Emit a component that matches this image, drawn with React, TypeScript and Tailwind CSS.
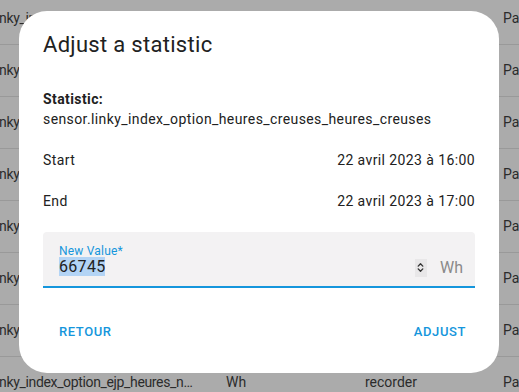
import { ChevronsUpDown } from 'lucide-react';

const rows = [
  { name: 'linky_index_option_heures_creuses_heures_creuses', unit: 'Wh', source: 'recorder' },
  { name: 'linky_index_option_heures_pleines_heures_pleines', unit: 'Wh', source: 'recorder' },
  { name: 'linky_index_option_base_index', unit: 'Wh', source: 'recorder' },
  { name: 'linky_index_option_tempo_bleu_hc', unit: 'Wh', source: 'recorder' },
  { name: 'linky_index_option_tempo_bleu_hp', unit: 'Wh', source: 'recorder' },
  { name: 'linky_index_option_tempo_blanc_hc', unit: 'Wh', source: 'recorder' },
  { name: 'linky_index_option_tempo_rouge_hp', unit: 'Wh', source: 'recorder' },
  { name: 'linky_index_option_ejp_heures_normales', unit: 'Wh', source: 'recorder' },
];

const StatTable = () => (
  <div className="mt-[-7px] flex flex-col">
    {rows.map((row, i) => (
      <div
        key={i}
        className="flex h-[52px] shrink-0 items-center border-b border-[#999999] text-[14px] text-[#2b2b2b]"
      >
        <div className="ml-[-7px] w-[205px] shrink-0 truncate tracking-[-0.35px]">{row.name}</div>
        <div className="ml-[28px] w-[139px] shrink-0">{row.unit}</div>
        <div className="w-[138px] shrink-0">{row.source}</div>
        <div className="shrink-0">Passé</div>
      </div>
    ))}
  </div>
);

const InfoRow = ({ label, value }: { label: string; value: string }) => (
  <div className="mt-[21px] flex items-center justify-between text-[14px] leading-5 tracking-[0.4px] text-[#212121]">
    <span>{label}</span>
    <span>{value}</span>
  </div>
);

const AdjustDialog = () => (
  <div className="absolute left-[19px] top-[11px] flex h-[362px] w-[480px] flex-col rounded-[28px] bg-white px-6 pt-5">
    <h2 className="text-[22px] leading-7 font-normal tracking-[0.3px] text-[#212121]">Adjust a statistic</h2>

    <div className="mt-[30px] text-[14px] leading-5 tracking-[0.4px] text-[#212121]">
      <div className="font-bold">Statistic:</div>
      <div>sensor.linky_index_option_heures_creuses_heures_creuses</div>
    </div>

    <InfoRow label="Start" value="22 avril 2023 à 16:00" />
    <InfoRow label="End" value="22 avril 2023 à 17:00" />

    <div className="mt-[21px] flex h-[56px] rounded-t-[4px] border-b-2 border-[#1596dc] bg-[#f3f2f3] pl-4 pr-3">
      <div className="flex flex-1 flex-col pt-[11px]">
        <span className="text-[12px] leading-4 tracking-[0.2px] text-[#1596dc]">New Value*</span>
        <span className="mt-[-2px] text-[16px] leading-5 tracking-[0.3px] text-[#212121]">
          <span className="bg-[#b3d4f5]">66745</span>
        </span>
      </div>
      <div className="flex items-center gap-[13px] pt-[17px]">
        <span className="flex h-[18px] w-[12px] items-center justify-center bg-[#e8e7e8] text-[#333]">
          <ChevronsUpDown size={11} strokeWidth={3} />
        </span>
        <span className="text-[16px] text-[#8a8a8a]">Wh</span>
      </div>
    </div>

    <div className="mt-[34px] flex items-center justify-between pl-4 pr-[9px] text-[13px] font-medium tracking-[0.6px] text-[#1596dc]">
      <button>RETOUR</button>
      <button>ADJUST</button>
    </div>
  </div>
);

export default function App() {
  return (
    <div
      className="relative h-[392px] w-[519px] overflow-hidden bg-[#ababab]"
      style={{ fontFamily: 'Roboto, "Liberation Sans", sans-serif' }}
    >
      <StatTable />
      <AdjustDialog />
    </div>
  );
}
